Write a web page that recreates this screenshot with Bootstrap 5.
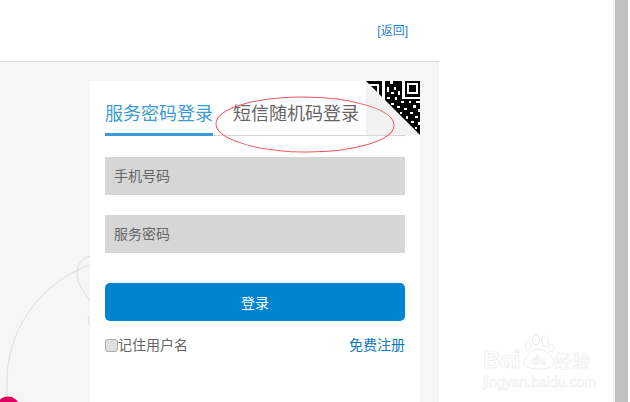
<!DOCTYPE html>
<html lang="zh">
<head>
<meta charset="utf-8">
<title>登录</title>
<link href="https://cdn.jsdelivr.net/npm/bootstrap@5.3.0/dist/css/bootstrap.min.css" rel="stylesheet">
<style>
html,body{height:402px;overflow:hidden;background:#fff}
body{font-family:"Microsoft YaHei","Liberation Sans","Noto Sans CJK SC",sans-serif;color:#666}
.shot{height:402px;position:relative}
.leftcol{width:439px}
.toph{height:62px;border-bottom:1px solid #dcdcdc;padding:22px 31px 0 0;font-size:12px;line-height:18px}
.toph a{color:#1f7fd0;text-decoration:none}
.panel{height:340px;background:#f6f6f6;padding:19px 19px 0 90px;position:relative}
.deco{position:absolute;left:0;top:0}
.loginbox{width:330px;height:321px;background:#fff;padding:0 15px;position:relative}
.tabsrow{height:55px;border-bottom:1px solid #d5d5d5;font-size:18px;line-height:26px;padding-top:20px;color:#666}
.tabon{width:108px;height:55px;margin-top:-20px;padding-top:20px;color:#3d9ad8;border-bottom:3px solid #3b9bd9;white-space:nowrap}
.taboff{margin-left:20px;white-space:nowrap}
.fieldbar{height:38px;background:#d6d6d6;color:#666;font-size:14px;line-height:38px;padding-left:9px;border:0;width:100%;display:block;border-radius:0}
.fieldbar:focus{background:#d6d6d6}
.fieldbar::placeholder{color:#666;opacity:1}
.gap22{margin-top:21px}
.gap20{margin-top:20px}
.gap30{margin-top:30px}
.okbtn{height:38px;width:100%;background:#0084d0;border:0;border-radius:5px;color:#fff;font-size:14px;padding:3px 0 0}
.okbtn:hover{background:#0084d0;color:#fff}
.optrow{margin-top:14px;font-size:14px;line-height:20px}
.optrow a{color:#0a78bd;text-decoration:none}
.tick{width:13px;height:13px;margin:0;appearance:none;background:#e0e0e0;border:1px solid #aaa;border-radius:3px;display:block}
.qrcorner{position:absolute;right:0;top:0;display:block}
.ring{position:absolute;left:0;top:0;pointer-events:none}
.sbar{width:13px;height:402px;background:#c0c0c0;margin-left:176px;box-shadow:-2px 0 0 #f1f1f1}
.wm{position:absolute;left:483px;top:334px;width:120px;pointer-events:none}
.wmline{font-size:24px;line-height:18px;font-weight:700;color:#fff;-webkit-text-stroke:.7px #ececec;font-family:"Liberation Sans",sans-serif;height:18px;margin-top:17px;white-space:nowrap}
.wmzh{font-size:18px;margin-left:34px;font-family:"Noto Sans CJK SC",sans-serif;font-weight:400;-webkit-text-stroke:.5px #ececec}
.wmurl{font-size:14px;line-height:16px;color:#fff;-webkit-text-stroke:.5px #ececec;font-family:"Liberation Sans",sans-serif;white-space:nowrap;margin-top:5px}
.wmpaw{position:absolute;left:39px;top:0}
.wmdu{font-size:11px;font-weight:700;font-family:"Liberation Sans",sans-serif;fill:#fff;stroke:#e4e4e4;stroke-width:.4px}
</style>
</head>
<body>
<div class="shot d-flex">
  <div class="leftcol flex-shrink-0">
    <div class="toph text-end"><a href="#">[返回]</a></div>
    <div class="panel">
      <svg class="deco" width="90" height="340" viewBox="0 62 90 340" fill="none" stroke="#dcdcdc" stroke-width="1">
        <path d="M90 265A124 124 0 0 0 7 385V398"/>
        <path d="M90 256C82 258 77 265 77 273C77 284 84 292 90 301"/>
        <path d="M90 316C87 317 88.500 325 90 326"/>
        <circle cx="8" cy="408" r="11.500" fill="#e0005f" stroke="none"/>
      </svg>
      <div class="loginbox">
        <div class="tabsrow d-flex">
          <div class="tabon">服务密码登录</div>
          <div class="taboff">短信随机码登录</div>
        </div>
        <svg class="qrcorner" width="54" height="54" viewBox="0 0 54 54" shape-rendering="crispEdges">
          <rect width="54" height="54" fill="#000"/>
          <g fill="#fff">
            <rect x="2" y="3" width="11" height="2"/><rect x="11" y="3" width="2" height="11"/>
            <rect x="16" y="0" width="3" height="26"/>
            <rect x="24" y="0" width="3" height="3"/>
            <rect x="21" y="6" width="2" height="5"/><rect x="28" y="6" width="2" height="3"/>
            <rect x="25" y="11" width="3" height="2"/><rect x="32" y="10" width="2" height="4"/>
            <rect x="21" y="16" width="3" height="2"/><rect x="29" y="16" width="2" height="3"/>
            <rect x="36" y="0" width="3" height="18"/><rect x="36" y="16" width="18" height="2"/>
            <rect x="41" y="2" width="11" height="11"/>
            <rect x="25" y="22" width="3" height="2"/><rect x="35" y="20" width="3" height="2"/><rect x="43" y="20" width="2" height="2"/><rect x="50" y="20" width="4" height="2"/>
            <rect x="31" y="25" width="3" height="2"/><rect x="47" y="24" width="3" height="3"/>
            <rect x="38" y="27" width="3" height="2"/><rect x="52" y="28" width="2" height="3"/>
            <rect x="34" y="31" width="2" height="2"/><rect x="44" y="31" width="3" height="2"/>
            <rect x="40" y="35" width="2" height="3"/><rect x="49" y="35" width="3" height="2"/>
            <rect x="45" y="40" width="3" height="2"/><rect x="52" y="41" width="2" height="3"/>
            <rect x="49" y="46" width="2" height="2"/>
          </g>
          <rect x="43" y="4" width="7" height="7" fill="#000"/>
          <polygon points="0,0 54,54 0,54" fill="#f2f2f2" shape-rendering="auto"/>
        </svg>
        <input class="fieldbar gap22 form-control shadow-none" placeholder="手机号码" aria-label="手机号码">
        <input class="fieldbar gap20 form-control shadow-none" placeholder="服务密码" aria-label="服务密码">
        <button type="button" class="btn okbtn gap30">登录</button>
        <div class="optrow d-flex justify-content-between align-items-center">
          <label class="d-flex align-items-center"><input type="checkbox" class="tick" aria-label="记住用户名">记住用户名</label>
          <a href="#">免费注册</a>
        </div>
      </div>
    </div>
  </div>
  <div class="sbar flex-shrink-0"></div>
  <svg class="ring" width="630" height="402" fill="none"><ellipse cx="305" cy="124.500" rx="89" ry="27.500" stroke="#ef5a5f" stroke-width="1" transform="rotate(0.500 305 124)"/></svg>
  <div class="wm">
    <svg class="wmpaw" width="36" height="36" viewBox="0 0 36 36" fill="#fff" stroke="#ececec" stroke-width="1">
      <ellipse cx="6" cy="12" rx="2.800" ry="4.500"/><ellipse cx="14" cy="6" rx="3.500" ry="5"/><ellipse cx="23" cy="7" rx="3.500" ry="5"/><ellipse cx="29" cy="14" rx="2.800" ry="4"/>
      <path d="M16 15C10 15 2 24 2 29C2 33 9 35 16 35C24 35 32 33 32 28C32 23 23 15 16 15Z"/>
      <text class="wmdu" x="10" y="30">du</text>
    </svg>
    <div class="wmline">Bai<span class="wmzh">经验</span></div>
    <div class="wmurl">jingyan.baidu.com</div>
  </div>
</div>
<script src="https://cdn.jsdelivr.net/npm/bootstrap@5.3.0/dist/js/bootstrap.bundle.min.js"></script>
</body>
</html>
